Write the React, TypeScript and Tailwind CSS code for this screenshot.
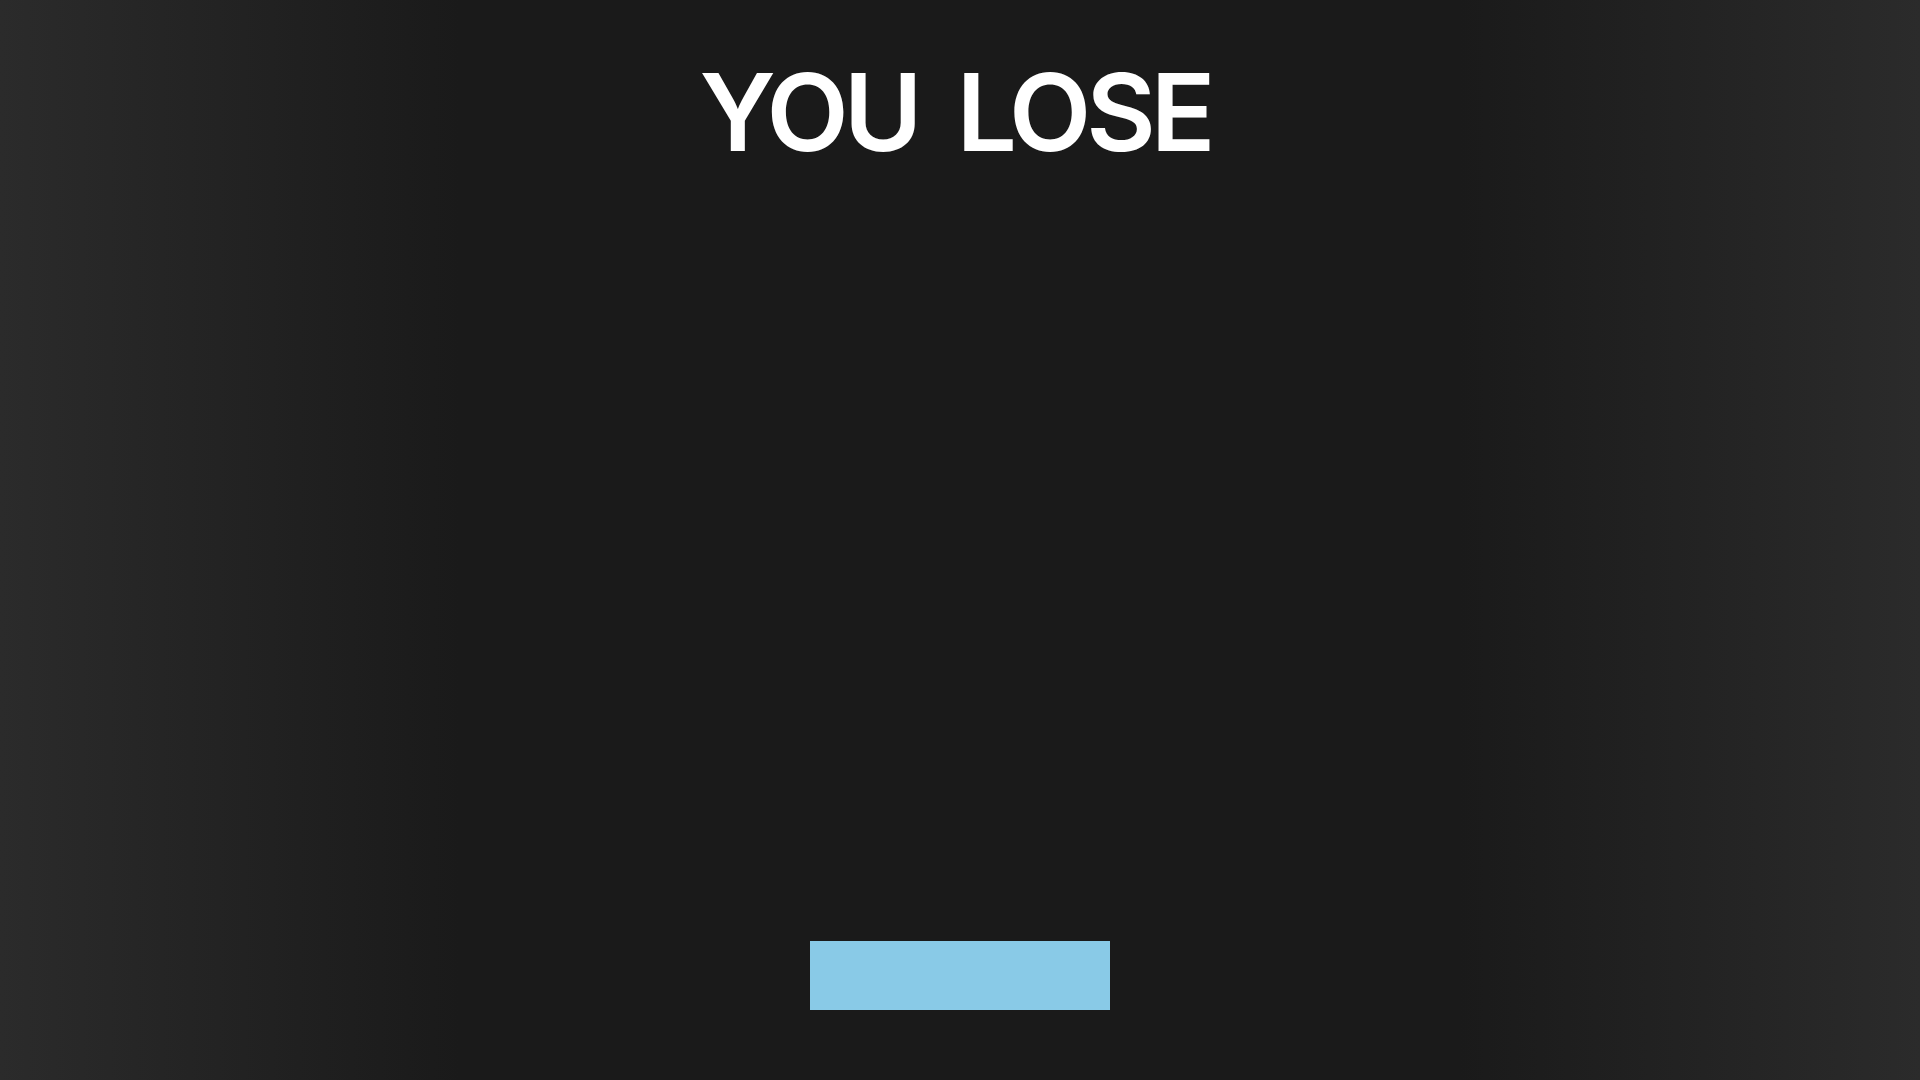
import React from "react";

export default function App() {
  return (
    <div className="w-[1920px] h-[1080px] flex flex-col items-center bg-[linear-gradient(to_right,#2b2b2b_0%,#1a1a1a_24%,#1a1a1a_76%,#2b2b2b_100%)] pt-[59px] pb-[70px] overflow-hidden">
      <h1 className="mr-[10px] text-[107px] leading-none font-semibold text-white tracking-[-5px] [word-spacing:17px] font-['Inter',sans-serif] whitespace-nowrap">
        YOU LOSE
      </h1>
      <button className="mt-auto w-[300px] h-[69px] bg-[#89cae7]" aria-label="restart"></button>
    </div>
  );
}
